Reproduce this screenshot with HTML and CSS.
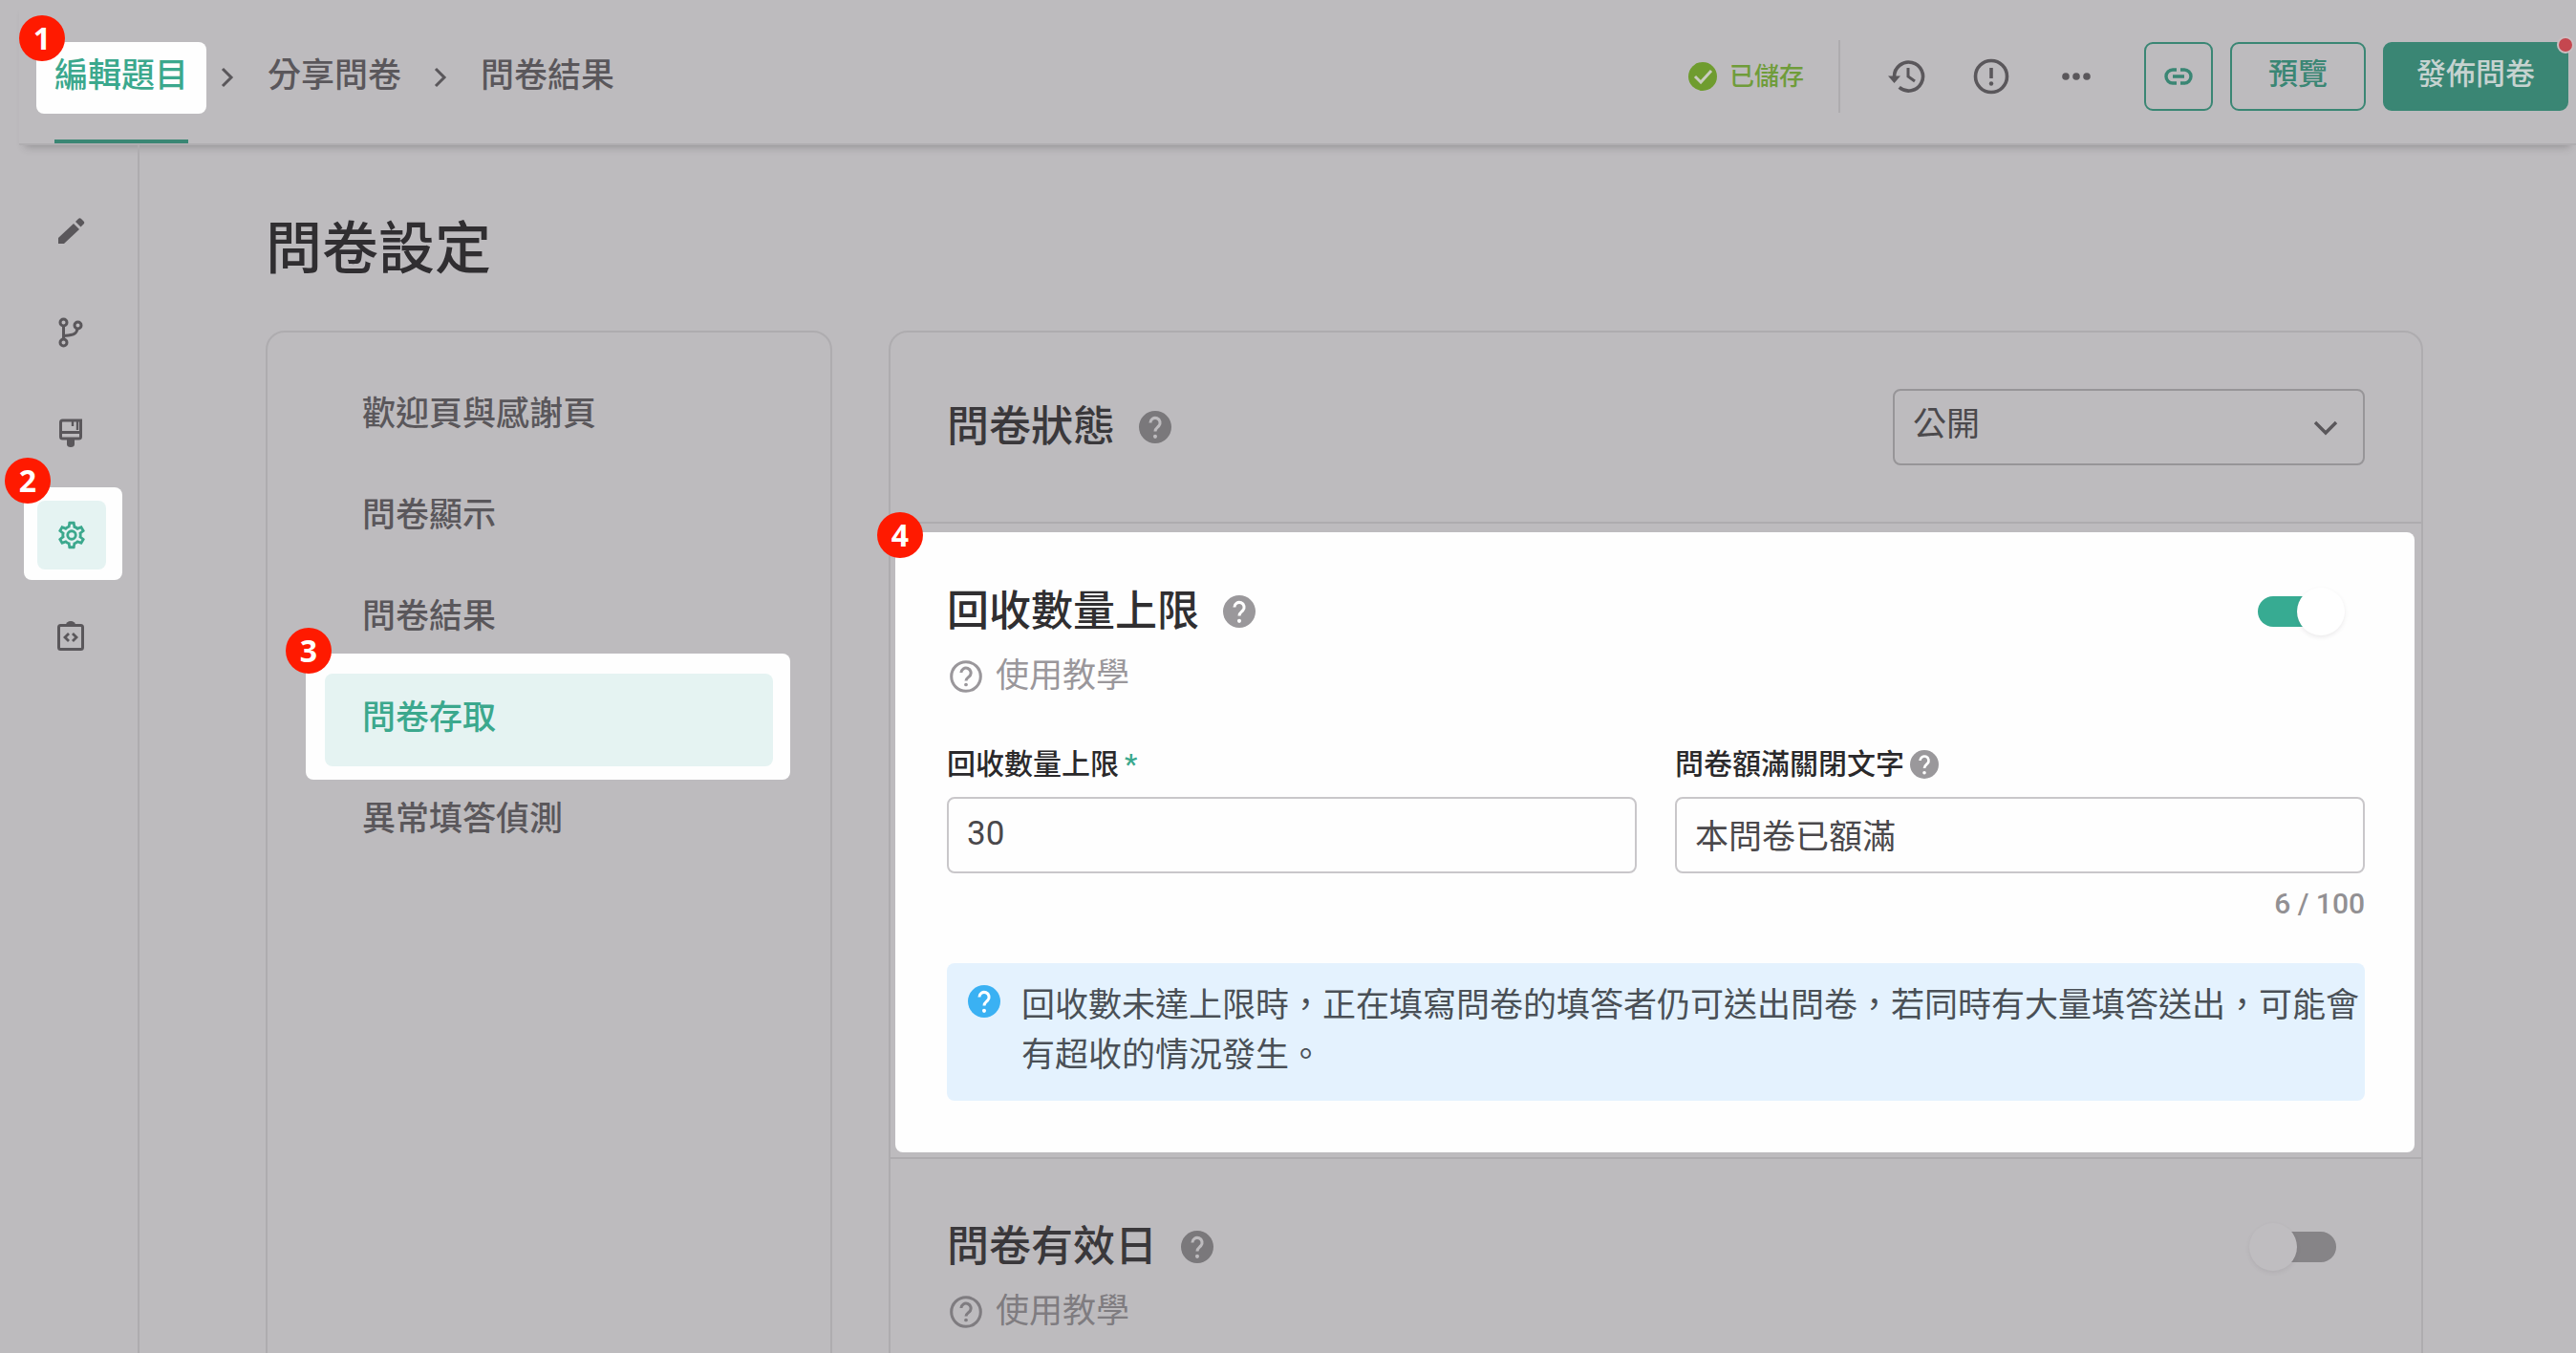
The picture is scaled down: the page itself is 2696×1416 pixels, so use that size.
FILE: index.html
```html
<!DOCTYPE html>
<html lang="zh-Hant">
<head>
<meta charset="utf-8">
<meta name="viewport" content="width=device-width, initial-scale=1">
<title>問卷設定</title>
<link rel="stylesheet" href="styles.css">
</head>
<body>
<svg class="sprite" aria-hidden="true">
  <symbol id="i-help" viewBox="2 2 20 20"><path fill="currentColor" d="M12 2a10 10 0 1 0 0 20 10 10 0 0 0 0-20z"/><path class="mark" d="M9 9.300a3 3 0 1 1 5.200 2.100c-1.200 1.100-2.200 1.600-2.200 3.300" fill="none" stroke-width="1.800"/><circle class="dot" cx="12" cy="17.800" r="1.200"/></symbol>
  <symbol id="i-help-line" viewBox="2 2 20 20"><circle cx="12" cy="12" r="9" fill="none" stroke="currentColor" stroke-width="1.800"/><path d="M9 9.700a3 3 0 1 1 5.200 2.100c-1.200 1.100-2.200 1.400-2.200 2.900" fill="none" stroke="currentColor" stroke-width="1.800"/><circle cx="12" cy="17" r="1.100" fill="currentColor"/></symbol>
  <symbol id="i-right" viewBox="0 0 15 24"><path d="M2 3l9 9-9 9" fill="none" stroke="currentColor" stroke-width="3"/></symbol>
</svg>
<div class="app">
  <header class="topbar">
    <nav class="steps" aria-label="步驟">
      <a class="step is-current" href="#edit"><span class="spot spot-step"></span>編輯題目<span class="badge badge-step">1</span></a>
      <svg class="chev"><use href="#i-right"/></svg>
      <a class="step" href="#share">分享問卷</a>
      <svg class="chev"><use href="#i-right"/></svg>
      <a class="step" href="#result">問卷結果</a>
    </nav>
    <div class="tools">
      <span class="saved"><svg viewBox="0 0 30 30"><circle cx="15" cy="15" r="15" fill="#6f9c2f"/><path d="M7 15l6 6 11-12" fill="none" stroke="#c9ccc0" stroke-width="3"/></svg>已儲存</span>
      <button class="icon-btn" aria-label="歷史紀錄"><svg viewBox="0 0 40 40"><path d="M7.500 20a15 15 0 1 1 5.200 11.400" fill="none" stroke="currentColor" stroke-width="3.600"/><path d="M1 19.500h13l-6.500 7.500z" fill="currentColor"/><path d="M22 11v9l7 5" fill="none" stroke="currentColor" stroke-width="3"/></svg></button>
      <button class="icon-btn" aria-label="問題回報"><svg viewBox="0 0 40 40"><circle cx="20" cy="20" r="16.500" fill="none" stroke="currentColor" stroke-width="3.600"/><path d="M20 11v11" stroke="currentColor" stroke-width="3.600"/><circle cx="20" cy="27.500" r="2.200" fill="currentColor"/></svg></button>
      <button class="icon-btn" aria-label="更多"><svg viewBox="0 0 40 40"><g fill="currentColor"><circle cx="9" cy="20" r="3.800"/><circle cx="20" cy="20" r="3.800"/><circle cx="31" cy="20" r="3.800"/></g></svg></button>
      <div class="actions">
        <button class="btn btn-link" aria-label="複製連結"><svg viewBox="0 0 30 18"><path d="M13 2H9a7 7 0 0 0 0 14h4M17 2h4a7 7 0 0 1 0 14h-4M9 9h12" fill="none" stroke="currentColor" stroke-width="3.400"/></svg></button>
        <button class="btn btn-preview">預覽</button>
        <button class="btn btn-publish">發佈問卷<span class="alert-dot"></span></button>
      </div>
    </div>
  </header>

  <nav class="rail" aria-label="編輯工具">
    <a class="rail-item" href="#pencil" aria-label="編輯"><svg viewBox="0 0 32 32"><path d="M3 29v-6L19 8l6 6L9 29z" fill="currentColor"/><path d="M21 6l3-3c1-1 2-1 3 0l2.500 2.500c1 1 1 2 0 3l-3 3z" fill="currentColor"/></svg></a>
    <a class="rail-item" href="#logic" aria-label="邏輯"><svg viewBox="0 0 32 32"><g fill="none" stroke="currentColor" stroke-width="3"><circle cx="8.500" cy="5.500" r="3.500"/><circle cx="8.500" cy="26.500" r="3.500"/><circle cx="23.500" cy="8.500" r="3.500"/><path d="M8.500 9v14M8.500 19.500c8-1 14-1 14.500-7.500"/></g></svg></a>
    <a class="rail-item" href="#design" aria-label="外觀"><svg viewBox="0 0 32 32"><path d="M5.500 4c0-1.500 1-2 2-2h19v17c0 1-.5 2-2 2h-17c-1.500 0-2-1-2-2zM5.500 14.500h21" fill="none" stroke="currentColor" stroke-width="3"/><path d="M18 3v5M23 3v9" stroke="currentColor" stroke-width="2.400"/><path d="M12 21h8v6c0 2-1.500 3-4 3s-4-1-4-3z" fill="currentColor"/></svg></a>
    <a class="rail-item is-current" href="#settings" aria-label="設定"><span class="spot spot-rail"></span><span class="rail-tile"><svg viewBox="0 0 24 24"><path fill="currentColor" d="M12 8a4 4 0 0 1 4 4 4 4 0 0 1-4 4 4 4 0 0 1-4-4 4 4 0 0 1 4-4m0 2a2 2 0 0 0-2 2 2 2 0 0 0 2 2 2 2 0 0 0 2-2 2 2 0 0 0-2-2m-2 12c-.25 0-.46-.18-.5-.42l-.37-2.650c-.63-.25-1.170-.59-1.690-.99l-2.490 1.010c-.22.08-.49 0-.61-.22l-2-3.460c-.13-.22-.07-.49.12-.64l2.110-1.660L4.500 12l.07-1-2.110-1.630c-.19-.15-.25-.42-.12-.64l2-3.460c.12-.22.39-.31.61-.22l2.490 1c.52-.39 1.060-.73 1.690-.98l.37-2.650c.04-.24.25-.42.5-.42h4c.25 0 .46.18.5.42l.37 2.650c.63.25 1.170.59 1.690.98l2.490-1c.22-.09.49 0 .61.22l2 3.460c.13.22.07.49-.12.64L19.430 11l.07 1-.07 1 2.110 1.630c.19.15.25.42.12.64l-2 3.460c-.12.22-.39.31-.61.22l-2.490-1c-.52.39-1.060.73-1.690.98l-.37 2.650c-.04.24-.25.42-.5.42zm1.250-18l-.37 2.610c-1.200.25-2.260.89-3.030 1.780L5.440 7.350l-.75 1.300L6.800 10.200a5.550 5.550 0 0 0 0 3.600l-2.120 1.560.75 1.300 2.430-1.040c.77.88 1.820 1.520 3.010 1.760l.37 2.620h1.520l.37-2.610c1.190-.25 2.240-.89 3.010-1.770l2.430 1.040.75-1.300-2.120-1.550c.4-1.170.4-2.440 0-3.610l2.110-1.550-.75-1.300-2.410 1.040a5.420 5.420 0 0 0-3.030-1.770L12.750 4z"/></svg></span><span class="badge badge-rail">2</span></a>
    <a class="rail-item" href="#embed" aria-label="嵌入"><svg viewBox="0 0 32 32"><rect x="3.500" y="4.500" width="25" height="25" rx="2" fill="none" stroke="currentColor" stroke-width="3"/><path d="M11 4a5 4 0 0 1 10 0z" fill="currentColor"/><path d="M14 13l-4 4 4 4M18 13l4 4-4 4" fill="none" stroke="currentColor" stroke-width="2.800"/></svg></a>
  </nav>

  <main class="content">
    <h1 class="title">問卷設定</h1>
    <div class="columns">
      <nav class="menu" aria-label="設定選單">
        <a class="menu-item" href="#welcome">歡迎頁與感謝頁</a>
        <a class="menu-item" href="#display">問卷顯示</a>
        <a class="menu-item" href="#results">問卷結果</a>
        <a class="menu-item is-current" href="#access"><span class="spot spot-menu"></span><span class="menu-tile">問卷存取</span><span class="badge badge-menu">3</span></a>
        <a class="menu-item" href="#anomaly">異常填答偵測</a>
      </nav>

      <div class="card">
        <section class="section">
          <div class="head">
            <h2 class="name"><label for="status">問卷狀態</label><svg class="help"><use href="#i-help"/></svg></h2>
            <span class="select">
              <select id="status"><option>公開</option></select>
              <svg class="caret" viewBox="0 0 26 16"><path d="M2 2l11 11L24 2" fill="none" stroke="currentColor" stroke-width="3.400"/></svg>
            </span>
          </div>
        </section>

        <section class="section is-lit">
          <span class="spot spot-section"></span>
          <span class="badge badge-section">4</span>
          <div class="head">
            <h2 class="name"><label for="limit-on">回收數量上限</label><svg class="help"><use href="#i-help"/></svg></h2>
            <input class="switch" id="limit-on" type="checkbox" checked>
          </div>
          <a class="guide" href="#guide-limit"><svg><use href="#i-help-line"/></svg>使用教學</a>
          <div class="fields">
            <div class="field">
              <label class="label" for="limit">回收數量上限<span class="req">*</span></label>
              <input class="input" id="limit" type="text" value="30">
            </div>
            <div class="field">
              <span class="label"><label for="full">問卷額滿關閉文字</label><svg class="help-sm"><use href="#i-help"/></svg></span>
              <input class="input" id="full" type="text" value="本問卷已額滿">
              <span class="count">6 / 100</span>
            </div>
          </div>
          <div class="note"><svg><use href="#i-help"/></svg><p>回收數未達上限時，正在填寫問卷的填答者仍可送出問卷，若同時有大量填答送出，可能會有超收的情況發生。</p></div>
        </section>

        <section class="section">
          <div class="head">
            <h2 class="name"><label for="valid-on">問卷有效日</label><svg class="help"><use href="#i-help"/></svg></h2>
            <input class="switch" id="valid-on" type="checkbox">
          </div>
          <a class="guide" href="#guide-valid"><svg><use href="#i-help-line"/></svg>使用教學</a>
        </section>
      </div>
    </div>
  </main>
</div>
</body>
</html>
```

FILE: styles.css
```css
:root {
  --bg: #bdbbbe;
  --line: #aeacaf;
  --text: #5a575b;
  --strong: #302e31;
  --muted: #7f7c80;
  --green: #3ba88d;
  --green-dim: #3a8674;
  --tint: #e5f3f2;
}

* { box-sizing: border-box; }

body {
  margin: 0;
  background: var(--bg);
  color: var(--text);
  font-family: Roboto, "Noto Sans CJK TC", sans-serif;
  font-size: 35px;
  line-height: 52px;
}

a { color: inherit; text-decoration: none; }
button, input, select { font: inherit; color: inherit; margin: 0; }
button { cursor: pointer; }
svg { display: block; flex: none; }
.sprite { position: absolute; width: 0; height: 0; }

.app {
  display: grid;
  grid-template: auto 1fr / 146px 1fr;
  height: 100vh;
  overflow: hidden;
}

/* highlight patches and numbered badges lie over the page */
.spot {
  position: absolute;
  z-index: -1;
  border-radius: 8px;
  background: #fefefe;
}
.badge {
  position: absolute;
  display: grid;
  place-items: center;
  width: 48px;
  height: 48px;
  border-radius: 50%;
  background: #ff1a00;
  color: #fff;
  font: 700 32px/48px "Open Sans", sans-serif;
}

/* top bar */
.topbar {
  grid-column: 1 / -1;
  display: flex;
  justify-content: space-between;
  height: 152px;
  margin-left: 20px;
  padding: 0 8px 0 37px;
  border-bottom: 2px solid #b0aeb1;
  box-shadow: 0 8px 8px -6px rgba(60, 55, 60, .3);
}
.steps { display: flex; align-items: stretch; gap: 34px; }
.step {
  position: relative;
  isolation: isolate;
  padding-top: 54px;
  border-bottom: 4px solid transparent;
  font-weight: 500;
}
.step.is-current { color: var(--green); border-color: var(--green-dim); }
.spot-step { inset: 44px -19px 27px; }
.badge-step { left: -37px; top: 16px; }
.chev { width: 15px; height: 24px; margin-top: 69px; }

.tools { display: flex; align-items: center; padding-top: 9px; }
.saved {
  display: flex;
  align-items: center;
  gap: 13px;
  height: 76px;
  padding-right: 36px;
  border-right: 2px solid #aeacaf;
  color: #6f9c3a;
  font-size: 26px;
  font-weight: 500;
}
.saved svg { width: 30px; height: 30px; }
.icon-btn {
  width: 40px;
  height: 40px;
  margin-left: 49px;
  padding: 0;
  border: 0;
  background: none;
}
.icon-btn svg { width: 40px; height: 40px; }
.actions { display: flex; gap: 18px; margin-left: 51px; }
.btn {
  position: relative;
  display: grid;
  place-items: center;
  height: 72px;
  padding: 0 38px 4px;
  border: 2px solid var(--green-dim);
  border-radius: 9px;
  background: none;
  color: var(--green-dim);
  font-size: 31px;
  font-weight: 500;
}
.btn-link { width: 72px; padding: 0; }
.btn-link svg { width: 30px; height: 18px; }
.btn-publish { padding: 0 33px 4px; background: var(--green-dim); color: #c6d3d0; }
.alert-dot {
  position: absolute;
  top: -8px;
  right: -8px;
  width: 18px;
  height: 18px;
  border: 2px solid #cbbfc2;
  border-radius: 50%;
  background: #c5474f;
}

/* icon rail */
.rail {
  display: flex;
  flex-direction: column;
  gap: 34px;
  padding: 54px 35px 0 39px;
  border-right: 2px solid var(--line);
}
.rail-item {
  position: relative;
  isolation: isolate;
  display: grid;
  place-items: center;
  height: 72px;
}
.rail-item > svg { width: 32px; height: 32px; }
.rail-tile {
  display: grid;
  place-items: center;
  width: 72px;
  height: 72px;
  border-radius: 8px;
  background: var(--tint);
  color: var(--green);
}
.rail-tile svg { width: 34px; height: 34px; }
.spot-rail { inset: -14px -19px -11px -14px; }
.badge-rail { left: -34px; top: -45px; }

/* content */
.content { padding: 0 160px 0 132px; min-width: 0; }
.title {
  margin: 65px 0 41px;
  color: var(--strong);
  font-size: 59px;
  font-weight: 500;
  line-height: 88px;
}
.columns { display: grid; grid-template-columns: 593px 1fr; gap: 59px; }
.menu, .card { border: 2px solid var(--line); border-radius: 20px; }
.menu {
  display: flex;
  flex-direction: column;
  gap: 9px;
  padding: 39px 60px;
  font-weight: 500;
}
.menu-item { position: relative; isolation: isolate; padding: 21px 39px 24px; }
.menu-item.is-current { padding: 0; color: var(--green); }
.menu-tile {
  display: block;
  padding: 21px 39px 24px;
  border-radius: 8px;
  background: var(--tint);
}
.spot-menu { inset: -21px -18px -14px -20px; }
.badge-menu { left: -41px; top: -48px; }

.section { position: relative; isolation: isolate; padding: 59px 59px 200px; }
.section + .section { border-top: 2px solid var(--line); }
.section:first-child { padding-bottom: 59px; }
.section.is-lit { padding-bottom: 59px; }
.spot-section { inset: 9px 7px 5px 5px; }
.badge-section { left: -14px; top: -12px; }

.head { display: flex; justify-content: space-between; align-items: center; height: 80px; }
.section + .section .head { height: 66px; }
.name {
  display: flex;
  align-items: center;
  gap: 25px;
  margin: 0;
  color: #3a383b;
  font-size: 44px;
  font-weight: 500;
  line-height: 66px;
}
.is-lit .name { color: #302f31; }
.help { width: 34px; height: 34px; color: #7a787b; }
.mark { stroke: var(--bg); }
.dot { fill: var(--bg); }
.is-lit .help, .is-lit .help-sm { color: #9a989b; }
.is-lit { --bg: #fff; }

.select { position: relative; width: 494px; }
.select select {
  appearance: none;
  display: block;
  width: 100%;
  height: 80px;
  padding: 0 60px 4px 19px;
  border: 2px solid #979598;
  border-radius: 8px;
  background: transparent;
  color: #4b494c;
}
.caret { position: absolute; right: 28px; top: 33px; width: 26px; height: 16px; pointer-events: none; }

.switch {
  appearance: none;
  position: relative;
  width: 82px;
  height: 32px;
  margin-right: 30px;
  border-radius: 16px;
  background: #868487;
}
.switch::before {
  content: "";
  position: absolute;
  left: -9px;
  top: -9px;
  width: 50px;
  height: 50px;
  border-radius: 50%;
  background: #bfbdc0;
  box-shadow: 0 2px 4px rgba(80, 70, 80, .1);
}
.switch:checked { background: #37ab92; }
.switch:checked::before { left: 41px; background: #fff; }

.guide {
  display: flex;
  align-items: center;
  gap: 14px;
  width: max-content;
  margin-top: 9px;
  padding-left: 3px;
  color: var(--muted);
}
.guide svg { width: 34px; height: 34px; }
.is-lit .guide { color: #9a979b; }

.fields { display: grid; grid-template-columns: 1fr 1fr; gap: 40px; margin-top: 44px; }
.field { display: flex; flex-direction: column; }
.label {
  display: flex;
  align-items: center;
  gap: 6px;
  margin-bottom: 12px;
  color: #2a292b;
  font-size: 30px;
  font-weight: 500;
  line-height: 44px;
}
.req { color: var(--green); }
.help-sm { width: 30px; height: 30px; }
.input {
  height: 80px;
  padding: 0 19px 4px;
  border: 2px solid #c9c7ca;
  border-radius: 8px;
  background: transparent;
  color: #4a484b;
}
.count {
  align-self: flex-end;
  margin-top: 10px;
  color: #929093;
  font-size: 30px;
  font-weight: 500;
  line-height: 44px;
}

.note {
  display: flex;
  gap: 22px;
  margin-top: 40px;
  padding: 19px 4px 21px 22px;
  border-radius: 8px;
  background: #e4f2fe;
  color: #4a5056;
}
.note svg { width: 34px; height: 34px; margin-top: 4px; color: #3ab1f3; }
.note p { margin: 0; }
```
